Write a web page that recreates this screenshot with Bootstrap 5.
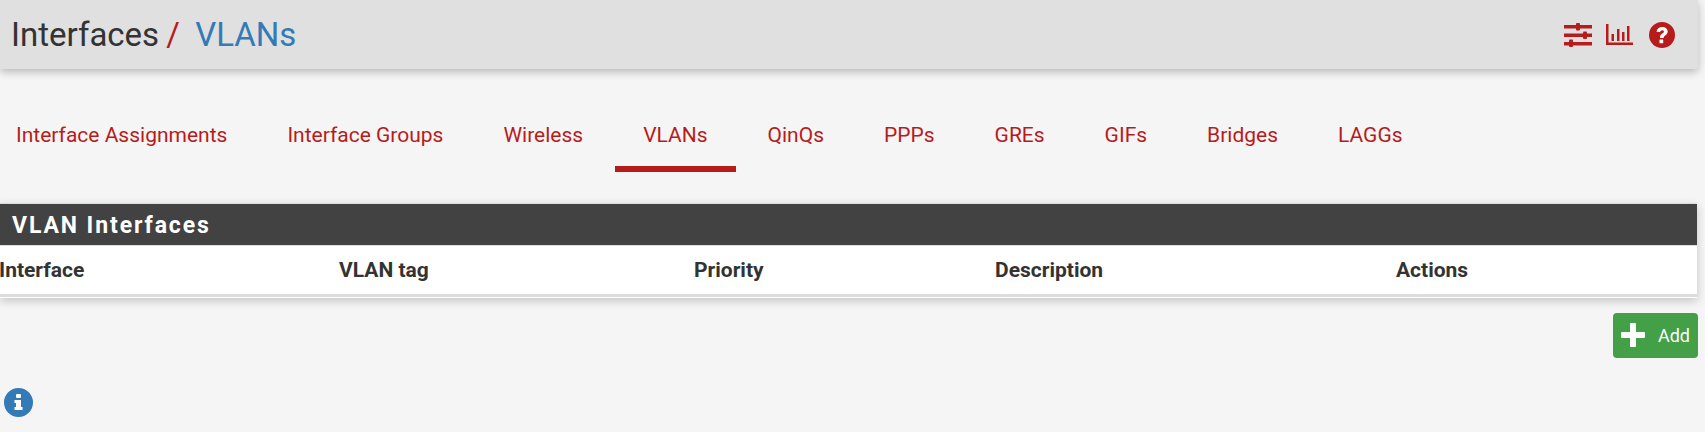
<!DOCTYPE html>
<html lang="en">
<head>
  <meta charset="UTF-8" />
  <title>Interfaces / VLANs</title>
  <link href="https://cdn.jsdelivr.net/npm/bootstrap@5.3.3/dist/css/bootstrap.min.css" rel="stylesheet">
  <style>
    html, body { height: 432px; overflow: hidden; }
    body { background-color: #f5f5f5; font-family: Roboto, sans-serif; color: #333; padding-right: 7px; }
    .top-bar { height: 69px; background-color: #e0e0e0; padding: 0 23px 0 11px; border-bottom-right-radius: 3px; box-shadow: 0 3px 8px rgba(0,0,0,.25); }
    .crumb { font-size: 33px; line-height: 1; font-weight: 400; margin: 0; }
    .crumb .sep { color: #b71c1c; margin: 0 7px 0 -1px; }
    .crumb a { color: #337ab7; text-decoration: none; font-weight: 400; }
    .top-icon { display: block; fill: #b71c1c; }
    .sliders-icon { margin-right: -2px; }
    .tab-row { padding-top: 32px; height: 134px; gap: 3px; }
    .tab-row .nav-link { color: #b71c1c; font-size: 21px; font-weight: 400; line-height: 24px; padding: 22px 28.500px 19px; border-bottom: 6px solid transparent; }
    .tab-row .first-tab { padding-left: 16px; }
    .tab-row .nav-link.active { border-bottom-color: #b71c1c; }
    .vlan-panel { background: #fff; box-shadow: 0 3px 9px rgba(0,0,0,.2); margin-right: 1px; }
    .vlan-head { background-color: #424242; color: #fff; font-size: 23px; font-weight: 700; letter-spacing: 1.900px; height: 43px; line-height: 43px; padding-left: 12px; margin: 0; border-top: 1px solid #ddd; border-bottom: 1px solid #ddd; }
    .vlan-table { margin: 0; table-layout: fixed; width: 100%; }
    .vlan-table th { font-size: 21px; font-weight: 700; color: #333; height: 49px; padding: 2px 0 0; text-indent: -1px; vertical-align: middle; border-bottom: 3px solid #ddd; background: #fff; }
    .vlan-foot { height: 1px; }
    .add-btn { background-color: #43a047; border: 0; border-radius: 4px; color: #fff; font-size: 18px; width: 85px; height: 45px; padding: 0 8px; margin-top: 15px; }
    .add-btn:hover { background-color: #43a047; color: #fff; }
    .info-btn { margin: 30px 0 0 4px; display: block; }
  </style>
</head>
<body>

<!-- Titulo -->
<div class="top-bar d-flex align-items-center justify-content-between">
  <h1 class="crumb"><span>Interfaces</span><span class="sep"> /</span> <a href="#">VLANs</a></h1>
  <div class="d-flex align-items-center gap-3">
    <svg class="top-icon sliders-icon" width="28" height="24" viewBox="0 0 28 24">
      <rect x="0" y="2" width="28" height="3.500"/><rect x="12" y="0" width="4" height="7.500" rx="1"/>
      <rect x="0" y="10.500" width="28" height="3.500"/><rect x="19" y="8.500" width="4" height="7.500" rx="1"/>
      <rect x="0" y="19" width="28" height="3.500"/><rect x="5" y="16.500" width="4" height="7.500" rx="1"/>
    </svg>
    <svg class="top-icon" width="27" height="21" viewBox="0 0 27 21">
      <rect x="0" y="0" width="2.500" height="21"/><rect x="0" y="18.500" width="27" height="2.500"/>
      <rect x="5.500" y="10" width="2.500" height="7"/><rect x="11" y="5" width="2.500" height="12"/>
      <rect x="16" y="8" width="2.500" height="9"/><rect x="21" y="2" width="2.500" height="15"/>
    </svg>
    <svg width="26" height="26" viewBox="0 0 26 26">
      <circle cx="13" cy="13" r="13" fill="#b71c1c"/>
      <path d="M7.500 9.800c.3-3 2.700-4.800 5.700-4.800 3.200 0 5.500 1.900 5.500 4.600 0 2-1.200 3.100-2.500 3.900-1.100.7-1.500 1.200-1.500 2.200v.3h-3.700v-.8c0-1.900.9-2.900 2.300-3.700 1-.6 1.600-1.100 1.600-1.800 0-.9-.8-1.400-1.700-1.400-1.100 0-1.900.7-2.100 1.800z" fill="#fff"/>
      <rect x="10.500" y="17.500" width="3.700" height="3.700" rx=".5" fill="#fff"/>
    </svg>
  </div>
</div>

<!-- Abas -->
<ul class="nav tab-row">
  <li class="nav-item"><a class="nav-link first-tab" href="#">Interface Assignments</a></li>
  <li class="nav-item"><a class="nav-link" href="#">Interface Groups</a></li>
  <li class="nav-item"><a class="nav-link" href="#">Wireless</a></li>
  <li class="nav-item"><a class="nav-link active" href="#">VLANs</a></li>
  <li class="nav-item"><a class="nav-link" href="#">QinQs</a></li>
  <li class="nav-item"><a class="nav-link" href="#">PPPs</a></li>
  <li class="nav-item"><a class="nav-link" href="#">GREs</a></li>
  <li class="nav-item"><a class="nav-link" href="#">GIFs</a></li>
  <li class="nav-item"><a class="nav-link" href="#">Bridges</a></li>
  <li class="nav-item"><a class="nav-link" href="#">LAGGs</a></li>
</ul>

<!-- Painel -->
<div class="vlan-panel">
  <h2 class="vlan-head">VLAN Interfaces</h2>
  <table class="table vlan-table">
    <thead>
      <tr>
        <th style="width: 340px">Interface</th>
        <th style="width: 355px">VLAN tag</th>
        <th style="width: 301px">Priority</th>
        <th style="width: 401px">Description</th>
        <th>Actions</th>
      </tr>
    </thead>
  </table>
  <div class="vlan-foot"></div>
</div>

<div class="d-flex justify-content-end">
  <a href="#" class="btn add-btn d-flex align-items-center justify-content-between">
    <svg width="24" height="24" viewBox="0 0 24 24"><path d="M9 1a1 1 0 0 1 1-1h4a1 1 0 0 1 1 1v8h8a1 1 0 0 1 1 1v4a1 1 0 0 1-1 1h-8v8a1 1 0 0 1-1 1h-4a1 1 0 0 1-1-1v-8H1a1 1 0 0 1-1-1v-4a1 1 0 0 1 1-1h8z" fill="#fff"/></svg>
    <span>Add</span>
  </a>
</div>

<svg class="info-btn" width="29" height="29" viewBox="0 0 29 29">
  <circle cx="14.500" cy="14.500" r="14.500" fill="#337ab7"/>
  <rect x="12" y="6" width="5" height="4" rx="1" fill="#fff"/>
  <path d="M10.500 12h6.500v7h1.500v3h-8v-3H12v-4h-1.500z" fill="#fff"/>
</svg>

<script src="https://cdn.jsdelivr.net/npm/bootstrap@5.3.3/dist/js/bootstrap.bundle.min.js"></script>
</body>
</html>
